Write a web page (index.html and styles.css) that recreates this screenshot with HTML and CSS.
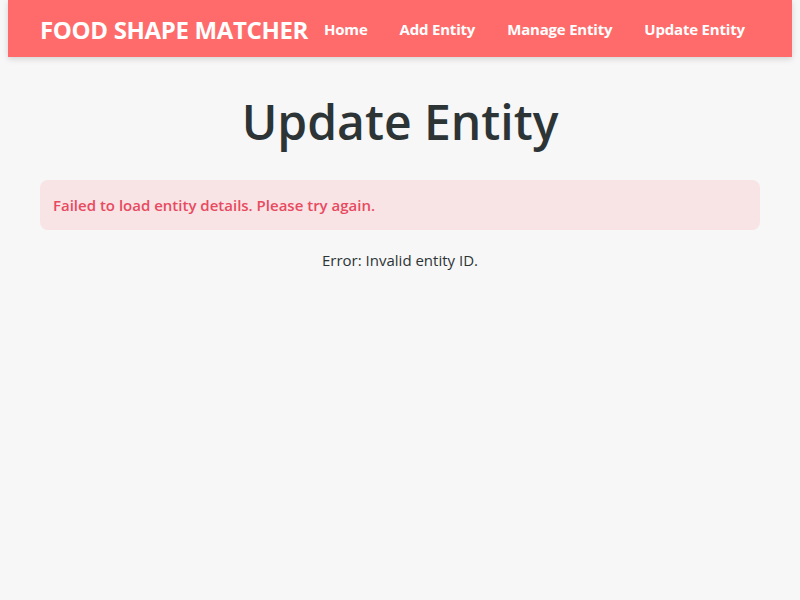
FILE: index.html
```html
<!DOCTYPE html>
<html lang="en">
<head>
<meta charset="utf-8">
<title>Update Entity</title>
<link rel="stylesheet" href="styles.css">
</head>
<body>
<nav class="navbar">
  <span class="brand">FOOD SHAPE MATCHER</span>
  <ul class="nav-links">
    <li><a href="#">Home</a></li>
    <li><a href="#">Add Entity</a></li>
    <li><a href="#">Manage Entity</a></li>
    <li><a href="#">Update Entity</a></li>
  </ul>
</nav>
<main class="container">
  <h1 class="title">Update Entity</h1>
  <div class="alert">Failed to load entity details. Please try again.</div>
  <p class="error-text">Error: Invalid entity ID.</p>
</main>
</body>
</html>
```

FILE: styles.css
```css
* { box-sizing: border-box; }
html, body { margin: 0; padding: 0; }
body {
  background: #f7f7f7;
  font-family: "Open Sans", "Noto Sans", sans-serif;
  color: #2d3436;
  padding: 0 8px;
}
.navbar {
  background: #ff6b6b;
  height: 57px;
  display: flex;
  align-items: center;
  justify-content: space-between;
  padding: 0 32px;
  box-shadow: 0 2px 6px rgba(0,0,0,0.15);
  white-space: nowrap;
}
.brand {
  color: #fff;
  font-weight: 700;
  font-size: 24px;
  letter-spacing: -0.35px;
  margin-top: 1px;
}
.nav-links {
  list-style: none;
  margin: 0;
  padding: 0;
  display: flex;
}
.nav-links a {
  display: block;
  padding: 0 16px;
  color: #fff;
  text-decoration: none;
  font-weight: 700;
  font-size: 15px;
  letter-spacing: -0.2px;
}
.container {
  padding: 0 32px;
}
.title {
  text-align: center;
  font-size: 48px;
  font-weight: 600;
  margin: 32px 0 26px;
  color: #2d3436;
}
.alert {
  background: #f8e3e5;
  color: #e84a5f;
  border-radius: 8px;
  padding: 15px 13px;
  font-size: 15px;
  font-weight: 600;
}
.error-text {
  text-align: center;
  font-size: 15px;
  margin: 20px 0;
}
```
